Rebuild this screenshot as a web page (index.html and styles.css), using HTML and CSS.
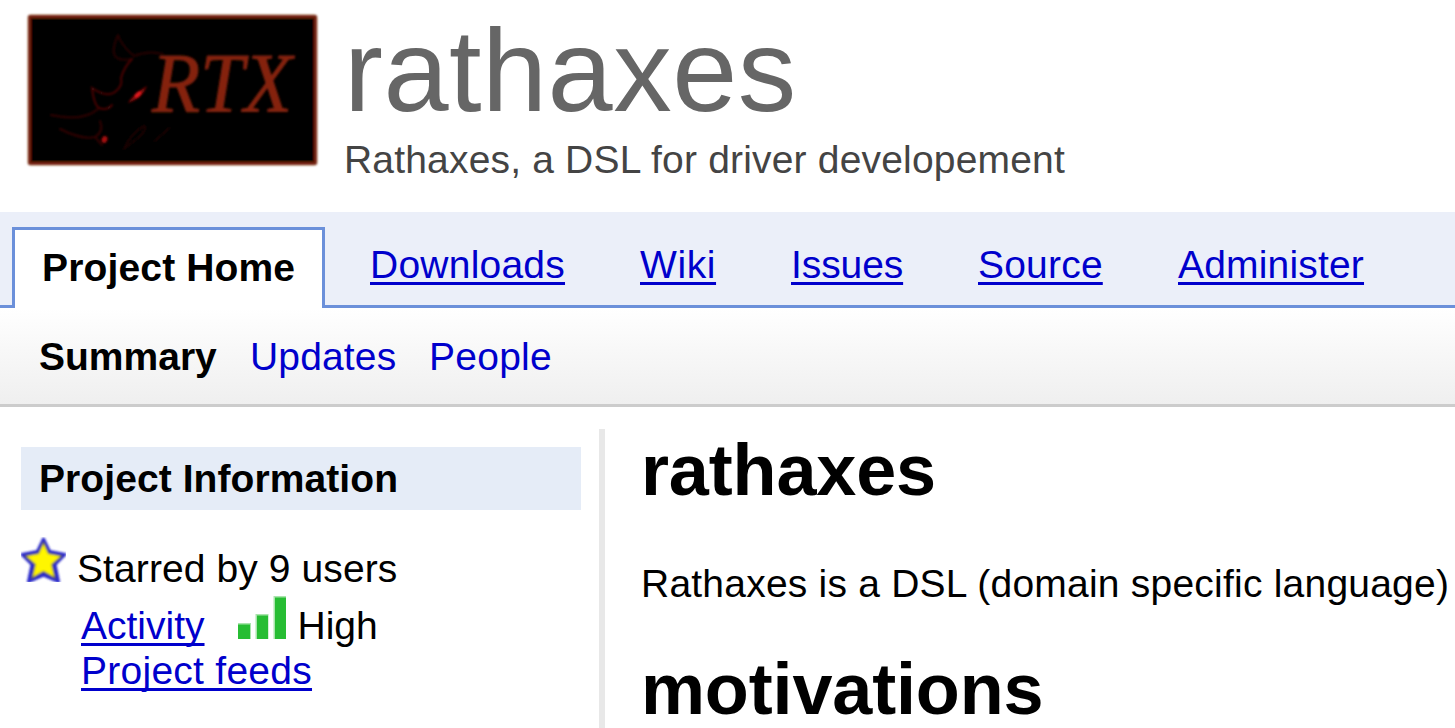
FILE: index.html
```html
<!DOCTYPE html>
<html lang="en">
<head>
<meta charset="utf-8">
<title>rathaxes</title>
<link rel="stylesheet" href="styles.css">
</head>
<body>
<header class="masthead">
  <svg class="logo" width="310" height="170" viewBox="0 0 310 170" role="img" aria-label="RTX">
    <defs>
      <filter id="soft" x="-10%" y="-10%" width="120%" height="120%"><feGaussianBlur stdDeviation="0.9"/></filter>
    </defs>
    <g filter="url(#soft)">
      <rect x="11.500" y="12.500" width="286" height="147" rx="1" fill="#000" stroke="#74200f" stroke-width="3.400"/>
    </g>
    <g filter="url(#soft)" fill="none" stroke="#3c0505" stroke-width="2" stroke-linecap="round">
      <path d="M100 31q-8 18-1 23q6 3 15 1M100 31q3 10 16 21q14-6 29-2" stroke="#280202"/>
      <path d="M114 55q-8 8-11 19q2 8-6 14q-8 6-23-4q2 17 7 20q8 3 13-3" stroke="#4b0707"/>
      <path d="M80 105q-15 13-47 6M82 117q4 11-5 16q-13 3-35-8M77 133l7 8" stroke="#310303"/>
      <path d="M106 145q8-17 20-23q4 2-5 11l-15 12M137 137l14-13" stroke="#1d0101"/>
    </g>
    <g filter="url(#soft)">
      <path d="M110 99q4-8 19-17q-5 13-19 17z" fill="#7b0808"/>
      <ellipse cx="120" cy="90.500" rx="4.200" ry="2.200" transform="rotate(-42 120 90.500)" fill="#e0161c"/>
      <ellipse cx="86.500" cy="135.500" rx="2.800" ry="3.500" transform="rotate(25 86.500 135.500)" fill="#a70d0d"/>
      <text class="logo-text" x="134" y="108" textLength="140" lengthAdjust="spacingAndGlyphs">RTX</text>
    </g>
  </svg>
  <div class="heading">
    <h1 class="name">rathaxes</h1>
    <p class="tagline">Rathaxes, a DSL for driver developement</p>
  </div>
</header>
<nav class="tabs">
  <span class="tab-active">Project Home</span>
  <a class="tab tab-downloads" href="#">Downloads</a>
  <a class="tab tab-wiki" href="#">Wiki</a>
  <a class="tab tab-issues" href="#">Issues</a>
  <a class="tab tab-source" href="#">Source</a>
  <a class="tab tab-admin" href="#">Administer</a>
</nav>
<nav class="subnav">
  <b class="sub-summary">Summary</b>
  <a class="sub-updates" href="#">Updates</a>
  <a class="sub-people" href="#">People</a>
</nav>
<div class="columns">
  <aside class="sidebar">
    <h2 class="side-title">Project Information</h2>
    <div class="starred">
      <svg class="star" width="45" height="45" viewBox="0 0 45 45" aria-hidden="true">
        <defs><filter id="starsoft"><feGaussianBlur stdDeviation="0.9"/></filter></defs>
        <g filter="url(#starsoft)">
          <path d="M22.500 2L28.500 14.500L44 17.500L34 27.500L37.500 44.500L22.500 38L7.500 44.500L11 27.500L1 17.500L16.500 14.500Z" fill="#2929cb" stroke="#2929cb" stroke-width="3" stroke-linejoin="round"/>
          <path d="M22.500 5.500L27.500 16.500L40.500 19L30.800 27.500L34 41L22.500 34.500L11 41L14.200 27.500L4.500 19L17.500 16.500Z" fill="#fff600" stroke="#66642a" stroke-width="1.200"/>
        </g>
      </svg>
      <span class="starred-text">Starred by 9 users</span>
    </div>
    <div class="activity">
      <a class="link" href="#">Activity</a>
      <svg class="bars" width="49" height="43" viewBox="0 0 49 43" aria-hidden="true">
        <path d="M0 27h13v16H0zM17.500 18h13v25h-13zM35.500 0H48v43H35.500z" fill="#a9e4ac"/>
        <path d="M0 28.500h12V43H0zM19 19.500h11V43H19zM37 1.500h11V43H37z" fill="#27bd33"/>
      </svg>
      <span>High</span>
    </div>
    <div class="feeds"><a class="link link-feeds" href="#">Project feeds</a></div>
  </aside>
  <main class="content">
    <h1 class="section">rathaxes</h1>
    <p class="intro">Rathaxes is a DSL (domain specific language)</p>
    <h1 class="section section-motivations">motivations</h1>
  </main>
</div>
</body>
</html>
```
FILE: styles.css
```css
* { box-sizing: border-box; }
body {
  margin: 0;
  height: 728px;
  overflow: hidden;
  background: #fff;
  color: #000;
  font: 39px/45px "Liberation Sans", Arial, sans-serif;
  white-space: nowrap;
}
h1, h2, p { margin: 0; }
a { color: #0000cc; }

.masthead { display: flex; height: 212px; padding: 4px 0 0 18px; }
.logo { flex: none; display: block; }
.logo-text {
  font: italic 84px "Liberation Serif", serif;
  fill: #85230f;
  stroke: #85230f;
  stroke-width: 1px;
}
.heading { padding-left: 16px; }
.name {
  height: 133px;
  color: #666;
  font-size: 117px;
  font-weight: normal;
  line-height: 133px;
  letter-spacing: 0.5px;
}
.tagline { color: #444; letter-spacing: 0.18px; }

.tabs {
  display: flex;
  height: 96px;
  padding: 15px 0 0 12px;
  background: #ebeff9;
  border-bottom: 3px solid #6b90da;
}
.tab-active {
  width: 313px;
  height: 81px;
  padding-left: 27px;
  background: #fff;
  border: 3px solid #6b90da;
  border-bottom: 0;
  font-weight: bold;
  line-height: 75px;
  letter-spacing: 0.15px;
}
.tab, .link {
  text-decoration: underline;
  text-decoration-thickness: 3px;
  text-underline-offset: 4px;
  text-decoration-skip-ink: none;
}
.tab { line-height: 75px; }
.tab-downloads { margin-left: 45px; width: 270px; letter-spacing: 0.23px; }
.tab-wiki { width: 151px; letter-spacing: 0.6px; }
.tab-issues { width: 187px; letter-spacing: -0.1px; }
.tab-source { width: 200px; letter-spacing: 0.2px; }
.tab-admin { letter-spacing: 0.18px; }

.subnav {
  display: flex;
  height: 99px;
  padding-left: 39px;
  background: linear-gradient(#fff, #efefef);
  border-bottom: 3px solid #ccc;
  line-height: 97px;
}
.subnav a { text-decoration: none; }
.sub-summary { width: 211px; }
.sub-updates { width: 179px; letter-spacing: 0.15px; }
.sub-people { letter-spacing: 0.25px; }

.columns { display: flex; height: 321px; padding: 22px 0 0 21px; }
.sidebar { flex: none; width: 578px; padding: 18px 18px 0 0; }
.side-title {
  height: 63px;
  padding-left: 18px;
  background: #e5ecf7;
  font-size: 39px;
  line-height: 63px;
  letter-spacing: 0.08px;
}
.starred { display: flex; height: 54px; margin-top: 27px; }
.starred-text { padding: 9px 0 0 11px; letter-spacing: 0.1px; }
.activity { display: flex; height: 57px; padding: 12px 0 0 60px; }
.bars { margin: -7px 11px 0 33px; }
.feeds { padding-left: 60px; }
.link-feeds { letter-spacing: 0.26px; }

.content {
  flex: 1;
  overflow: hidden;
  padding-left: 36px;
  border-left: 6px solid #e8e8e8;
}
.section { font-size: 72px; line-height: 82px; letter-spacing: -0.15px; }
.intro { padding: 50px 0 42px; letter-spacing: 0.22px; }
```
